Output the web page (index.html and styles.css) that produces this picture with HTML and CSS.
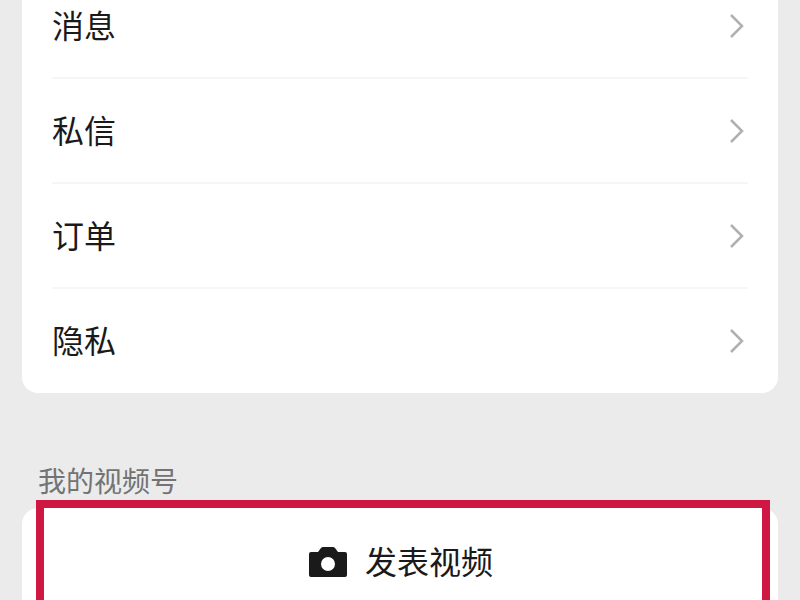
FILE: index.html
```html
<!DOCTYPE html>
<html lang="zh-CN">
<head>
    <meta charset="UTF-8">
    <meta name="viewport" content="width=device-width, initial-scale=1.0">
    <title>视频号</title>
    <link rel="stylesheet" href="styles.css">
</head>
<body>
    <nav class="menu-card">
        <a class="menu-item" href="#messages">
            <span>消息</span>
            <svg class="arrow" viewBox="0 0 16 26"><path d="M3 2l11 11L3 24"/></svg>
        </a>
        <a class="menu-item" href="#chats">
            <span>私信</span>
            <svg class="arrow" viewBox="0 0 16 26"><path d="M3 2l11 11L3 24"/></svg>
        </a>
        <a class="menu-item" href="#orders">
            <span>订单</span>
            <svg class="arrow" viewBox="0 0 16 26"><path d="M3 2l11 11L3 24"/></svg>
        </a>
        <a class="menu-item" href="#privacy">
            <span>隐私</span>
            <svg class="arrow" viewBox="0 0 16 26"><path d="M3 2l11 11L3 24"/></svg>
        </a>
    </nav>

    <section class="channel">
        <h2>我的视频号</h2>
        <div class="publish-card">
            <button class="publish-btn" type="button">
                <svg class="camera" viewBox="0 0 38 32"><path fill-rule="evenodd" d="M14 1h10q1 0 2 1l3 4h7q2 0 2 2v21q0 2-2 2H2q-2 0-2-2V8q0-2 2-2h7l3-4q1-1 2-1zM19 11a7 7 0 1 0 0 14a7 7 0 1 0 0-14z"/></svg>
                <span>发表视频</span>
            </button>
        </div>
    </section>
</body>
</html>
```
FILE: styles.css
```css
* {
    box-sizing: border-box;
}
body {
    margin: 0;
    padding: 0 22px;
    height: 100vh;
    overflow: hidden;
    background-color: #ebebeb;
    color: #1a1a1a;
    font-family: "Noto Sans CJK SC", sans-serif;
}
.menu-card {
    margin-top: -26px;
    padding: 0 30px;
    background-color: #fff;
    border-radius: 0 0 16px 16px;
}
.menu-item {
    display: flex;
    justify-content: space-between;
    align-items: center;
    height: 105px;
    padding-right: 4px;
    border-bottom: 2px solid #f6f6f6;
    color: inherit;
    font-size: 32px;
    text-decoration: none;
}
.menu-item:last-child {
    height: 104px;
    border-bottom: none;
}
.menu-item span, .publish-btn span {
    padding-bottom: 4px;
}
.arrow {
    width: 16px;
    height: 26px;
    fill: none;
    stroke: #b0b0b0;
    stroke-width: 2.5;
}
.channel h2 {
    margin: 67px 16px 0;
    color: #737373;
    font-size: 28px;
    font-weight: 400;
    line-height: 40px;
}
.publish-card {
    display: flow-root;
    margin-top: 8px;
    padding: 0 8px 0 14px;
    background-color: #fff;
    border-radius: 16px;
}
.publish-btn {
    display: flex;
    justify-content: center;
    align-items: center;
    gap: 18px;
    width: 100%;
    height: 124px;
    margin-top: -8px;
    padding: 0 4px 0 0;
    border: 8px solid #cf1744;
    background-color: #fff;
    color: inherit;
    font-family: inherit;
    font-size: 32px;
}
.camera {
    width: 38px;
    height: 32px;
    fill: #1a1a1a;
}
```
